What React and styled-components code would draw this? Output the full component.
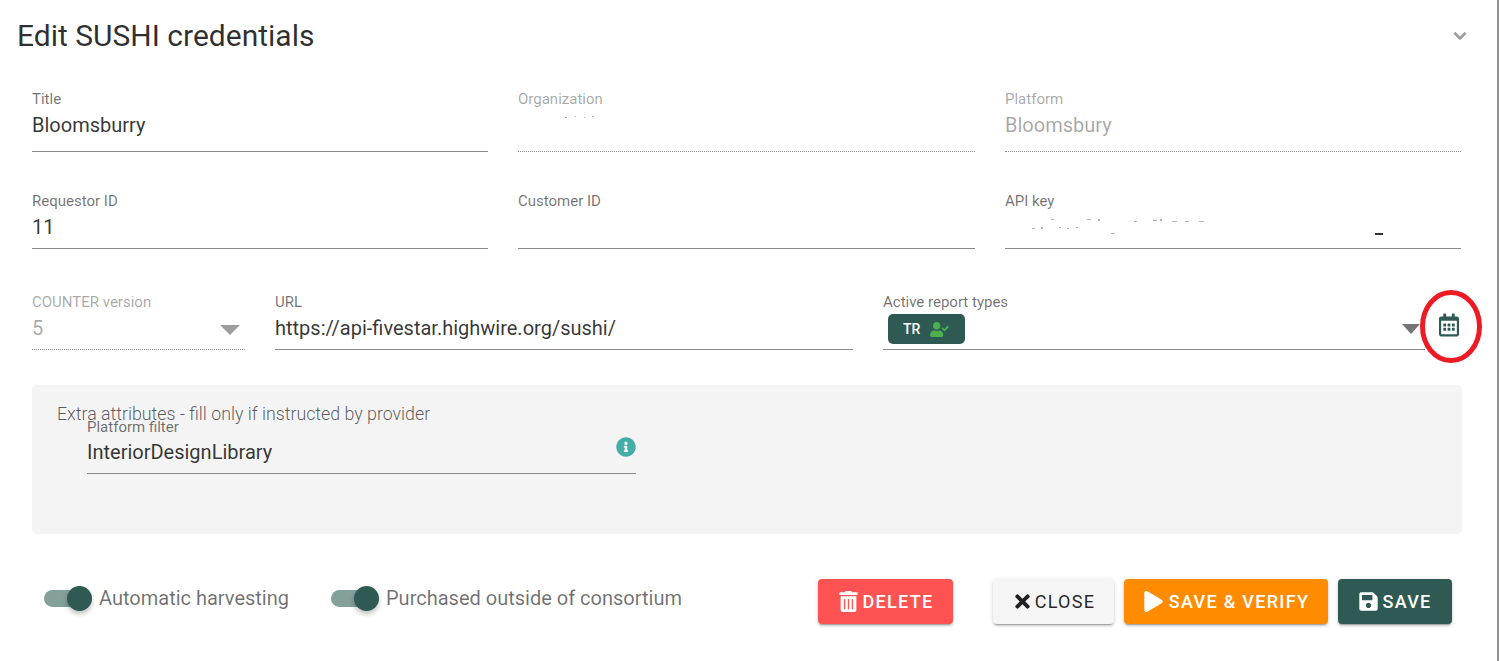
import React from "react"
import styled, { createGlobalStyle } from "styled-components"
import { FaChevronDown, FaInfoCircle, FaPlay, FaRegCalendarAlt, FaSave, FaTimes, FaTrashAlt, FaUserCheck } from "react-icons/fa"

const GlobalStyle = createGlobalStyle`
  html, body {
    margin: 0;
    padding: 0;
    background: #fff;
    font-family: Roboto, "Liberation Sans", sans-serif;
    overflow: hidden;
  }
`

const App = () => {
  return (
    <Page>
      <GlobalStyle />
      <Header>
        <Title>Edit SUSHI credentials</Title>
        <Chevron />
      </Header>
      <Form>
        <FieldGrid>
          <Field label="Title" value="Bloomsburry" />
          <Field label="Organization" value="" disabled>
            <Specks viewBox="0 0 85 8" $width={85} $height={8} $top={25}>
              <rect x="47" y="2" width="2" height="1" />
              <rect x="57" y="1" width="1" height="1" />
              <rect x="66" y="2" width="1" height="1" />
              <rect x="74" y="1" width="2" height="1" />
            </Specks>
          </Field>
          <Field label="Platform" value="Bloomsbury" disabled />
          <Field label="Requestor ID" value="11" />
          <Field label="Customer ID" value="" />
          <Field label="API key" value="">
            <Specks viewBox="0 0 385 26" $width={385} $height={26} $top={26}>
              <rect x="46" y="1" width="3" height="1" />
              <rect x="82" y="1" width="4" height="1" />
              <rect x="93" y="1" width="2" height="2" />
              <rect x="129" y="3" width="3" height="1" />
              <rect x="148" y="2" width="4" height="1" />
              <rect x="155" y="1" width="2" height="2" />
              <rect x="167" y="3" width="5" height="1" />
              <rect x="180" y="3" width="4" height="1" />
              <rect x="194" y="3" width="5" height="1" />
              <rect x="27" y="10" width="3" height="1" />
              <rect x="36" y="9" width="2" height="2" />
              <rect x="54" y="9" width="2" height="1" />
              <rect x="62" y="10" width="2" height="1" />
              <rect x="71" y="9" width="2" height="1" />
              <rect x="106" y="15" width="4" height="1" />
              <rect x="370" y="15" width="8" height="2" fill="#333" />
            </Specks>
          </Field>
        </FieldGrid>
        <ThirdRow>
          <VersionCol>
            <Field label="COUNTER version" value="5" disabled>
              <SelectArrow />
            </Field>
          </VersionCol>
          <UrlCol>
            <Field label="URL" value="https://api-fivestar.highwire.org/sushi/" />
          </UrlCol>
          <ReportsCol>
            <FieldBox>
              <Label>Active report types</Label>
              <ChipRow>
                <Chip>
                  TR <FaUserCheck />
                </Chip>
                <Arrow />
              </ChipRow>
            </FieldBox>
          </ReportsCol>
          <CalendarSlot>
            <FaRegCalendarAlt />
            <Circle viewBox="0 0 62 73">
              <ellipse cx="31" cy="36.5" rx="28.5" ry="34" />
            </Circle>
          </CalendarSlot>
        </ThirdRow>
        <ExtraPanel>
          <ExtraTitle>Extra attributes - fill only if instructed by provider</ExtraTitle>
          <FilterCol>
            <FieldBox>
              <Label>Platform filter</Label>
              <Value $tight>InteriorDesignLibrary</Value>
              <InfoIcon />
            </FieldBox>
          </FilterCol>
        </ExtraPanel>
        <Footer>
          <Toggle>
            <Track>
              <Knob />
            </Track>
            <ToggleLabel>Automatic harvesting</ToggleLabel>
          </Toggle>
          <Toggle>
            <Track>
              <Knob />
            </Track>
            <ToggleLabel>Purchased outside of consortium</ToggleLabel>
          </Toggle>
          <Spacer />
          <Button $bg="#ff5252" $color="#fff" $width={135} $gap={4}>
            <FaTrashAlt /> Delete
          </Button>
          <Button $bg="#f5f5f5" $color="rgba(0,0,0,.87)" $width={121} $left={40} $weight={400} $gap={2}>
            <FaTimes /> Close
          </Button>
          <Button $bg="#ff8c00" $color="#fff" $width={204} $left={10}>
            <FaPlay /> Save &amp; verify
          </Button>
          <Button $bg="#2f5953" $color="#fff" $width={114} $left={10} $gap={3}>
            <FaSave /> Save
          </Button>
        </Footer>
      </Form>
    </Page>
  )
}

const Field = ({ label, value, disabled, children }) => (
  <FieldBox $disabled={disabled}>
    <Label $disabled={disabled}>{label}</Label>
    <Value $disabled={disabled}>{value}</Value>
    {children}
  </FieldBox>
)

const Page = styled.div`
  width: 1499px;
  height: 661px;
  box-sizing: border-box;
  border-right: 2px solid #8c9190;
  position: relative;
  overflow: hidden;
`

const Header = styled.div`
  height: 71px;
  box-sizing: border-box;
  padding: 17px 30px 0 17px;
  display: flex;
  justify-content: space-between;
  align-items: flex-start;
`

const Title = styled.div`
  font-size: 30px;
  line-height: 38px;
  color: rgba(0, 0, 0, 0.82);
`

const Chevron = styled(FaChevronDown)`
  width: 14px;
  height: 14px;
  margin-top: 12px;
  color: #9e9e9e;
  stroke: currentColor;
  stroke-width: 30;
`

const Form = styled.div`
  padding: 0 35px 0 32px;
`

const FieldGrid = styled.div`
  display: grid;
  grid-template-columns: 456px 457px 456px;
  grid-template-rows: 62px 57px;
  column-gap: 30px;
  row-gap: 40px;
  padding-top: 19px;
`

const FieldBox = styled.div`
  position: relative;
  height: 100%;
  box-sizing: border-box;
  border-bottom: 1px ${p => (p.$disabled ? "dotted" : "solid")} #8a8a8a;
`

const Label = styled.div`
  font-size: 15px;
  line-height: 18px;
  color: ${p => (p.$disabled ? "rgba(0,0,0,.36)" : "rgba(0,0,0,.56)")};
`

const Value = styled.div`
  font-size: 20px;
  line-height: 28px;
  min-height: 28px;
  margin-top: ${p => (p.$tight ? 2 : 3)}px;
  color: ${p => (p.$disabled ? "rgba(0,0,0,.36)" : "rgba(0,0,0,.8)")};
`

const Specks = styled.svg`
  position: absolute;
  left: 0;
  top: ${p => p.$top}px;
  width: ${p => p.$width}px;
  height: ${p => p.$height}px;
  fill: #b5b5b5;
`

const ThirdRow = styled.div`
  display: flex;
  height: 57px;
  margin-top: 44px;
`

const VersionCol = styled.div`
  width: 213px;
`

const UrlCol = styled.div`
  width: 578px;
  margin-left: 30px;
`

const ReportsCol = styled.div`
  width: 542px;
  margin-left: 30px;
`

const ChipRow = styled.div`
  display: flex;
  align-items: center;
  justify-content: space-between;
  padding-left: 5px;
  margin-top: 3px;
`

const Chip = styled.div`
  width: 77px;
  height: 30px;
  box-sizing: border-box;
  padding-left: 15px;
  display: flex;
  align-items: center;
  gap: 10px;
  background: #2f5953;
  border-radius: 5px;
  color: #fff;
  font-size: 14px;
  font-weight: 500;
  svg {
    width: 19px;
    height: 15px;
    color: #4caf50;
  }
`

const Arrow = styled.div`
  width: 0;
  height: 0;
  border-left: 9px solid transparent;
  border-right: 9px solid transparent;
  border-top: 10px solid #757575;
  margin-right: 5px;
`

const SelectArrow = styled.div`
  position: absolute;
  right: 5px;
  top: 32px;
  width: 0;
  height: 0;
  border-left: 10px solid transparent;
  border-right: 10px solid transparent;
  border-top: 10px solid #9e9e9e;
`

const CalendarSlot = styled.div`
  position: relative;
  width: 23px;
  margin-left: 14px;
  padding-top: 20px;
  color: #2f5953;
  svg:first-child {
    width: 20px;
    height: 24px;
  }
`

const Circle = styled.svg`
  position: absolute;
  left: -19px;
  top: -3px;
  width: 62px;
  height: 73px;
  ellipse {
    fill: none;
    stroke: #ed1c24;
    stroke-width: 5;
  }
`

const ExtraPanel = styled.div`
  margin-top: 35px;
  width: 1430px;
  height: 149px;
  box-sizing: border-box;
  padding: 19px 25px 0;
  background: #f4f4f4;
  border-radius: 5px;
`

const ExtraTitle = styled.div`
  font-size: 17.8px;
  font-weight: 300;
  line-height: 20px;
  color: rgba(0, 0, 0, 0.65);
`

const FilterCol = styled.div`
  width: 549px;
  height: 56px;
  margin: -6px 0 0 30px;
`

const InfoIcon = styled(FaInfoCircle)`
  position: absolute;
  right: 0;
  top: 19px;
  width: 20px;
  height: 20px;
  color: #45ada8;
`

const Footer = styled.div`
  display: flex;
  align-items: center;
  width: 1420px;
  height: 45px;
  margin-top: 45px;
`

const Toggle = styled.div`
  display: flex;
  align-items: center;
  margin: 0 30px 7px 12px;
`

const Track = styled.div`
  position: relative;
  width: 36px;
  height: 17px;
  border-radius: 9px;
  background: #83a09b;
  margin-right: 19px;
`

const Knob = styled.div`
  position: absolute;
  right: -12px;
  top: -4px;
  width: 25px;
  height: 25px;
  border-radius: 50%;
  background: #2f5953;
  box-shadow: 0 3px 5px rgba(0, 0, 0, 0.25);
`

const ToggleLabel = styled.div`
  font-size: 20px;
  font-weight: 400;
  color: rgba(0, 0, 0, 0.56);
`

const Spacer = styled.div`
  flex: 1;
`

const Button = styled.div`
  width: ${p => p.$width}px;
  height: 45px;
  margin-left: ${p => p.$left || 0}px;
  display: flex;
  align-items: center;
  justify-content: center;
  gap: ${p => p.$gap ?? 5}px;
  background: ${p => p.$bg};
  color: ${p => p.$color};
  border-radius: 4px;
  font-size: 18px;
  font-weight: ${p => p.$weight || 500};
  letter-spacing: 1.3px;
  text-transform: uppercase;
  box-shadow: 0 3px 1px -2px rgba(0, 0, 0, 0.2), 0 2px 2px rgba(0, 0, 0, 0.14), 0 1px 5px rgba(0, 0, 0, 0.12);
  svg {
    height: 21px;
    width: auto;
  }
`

export default App
